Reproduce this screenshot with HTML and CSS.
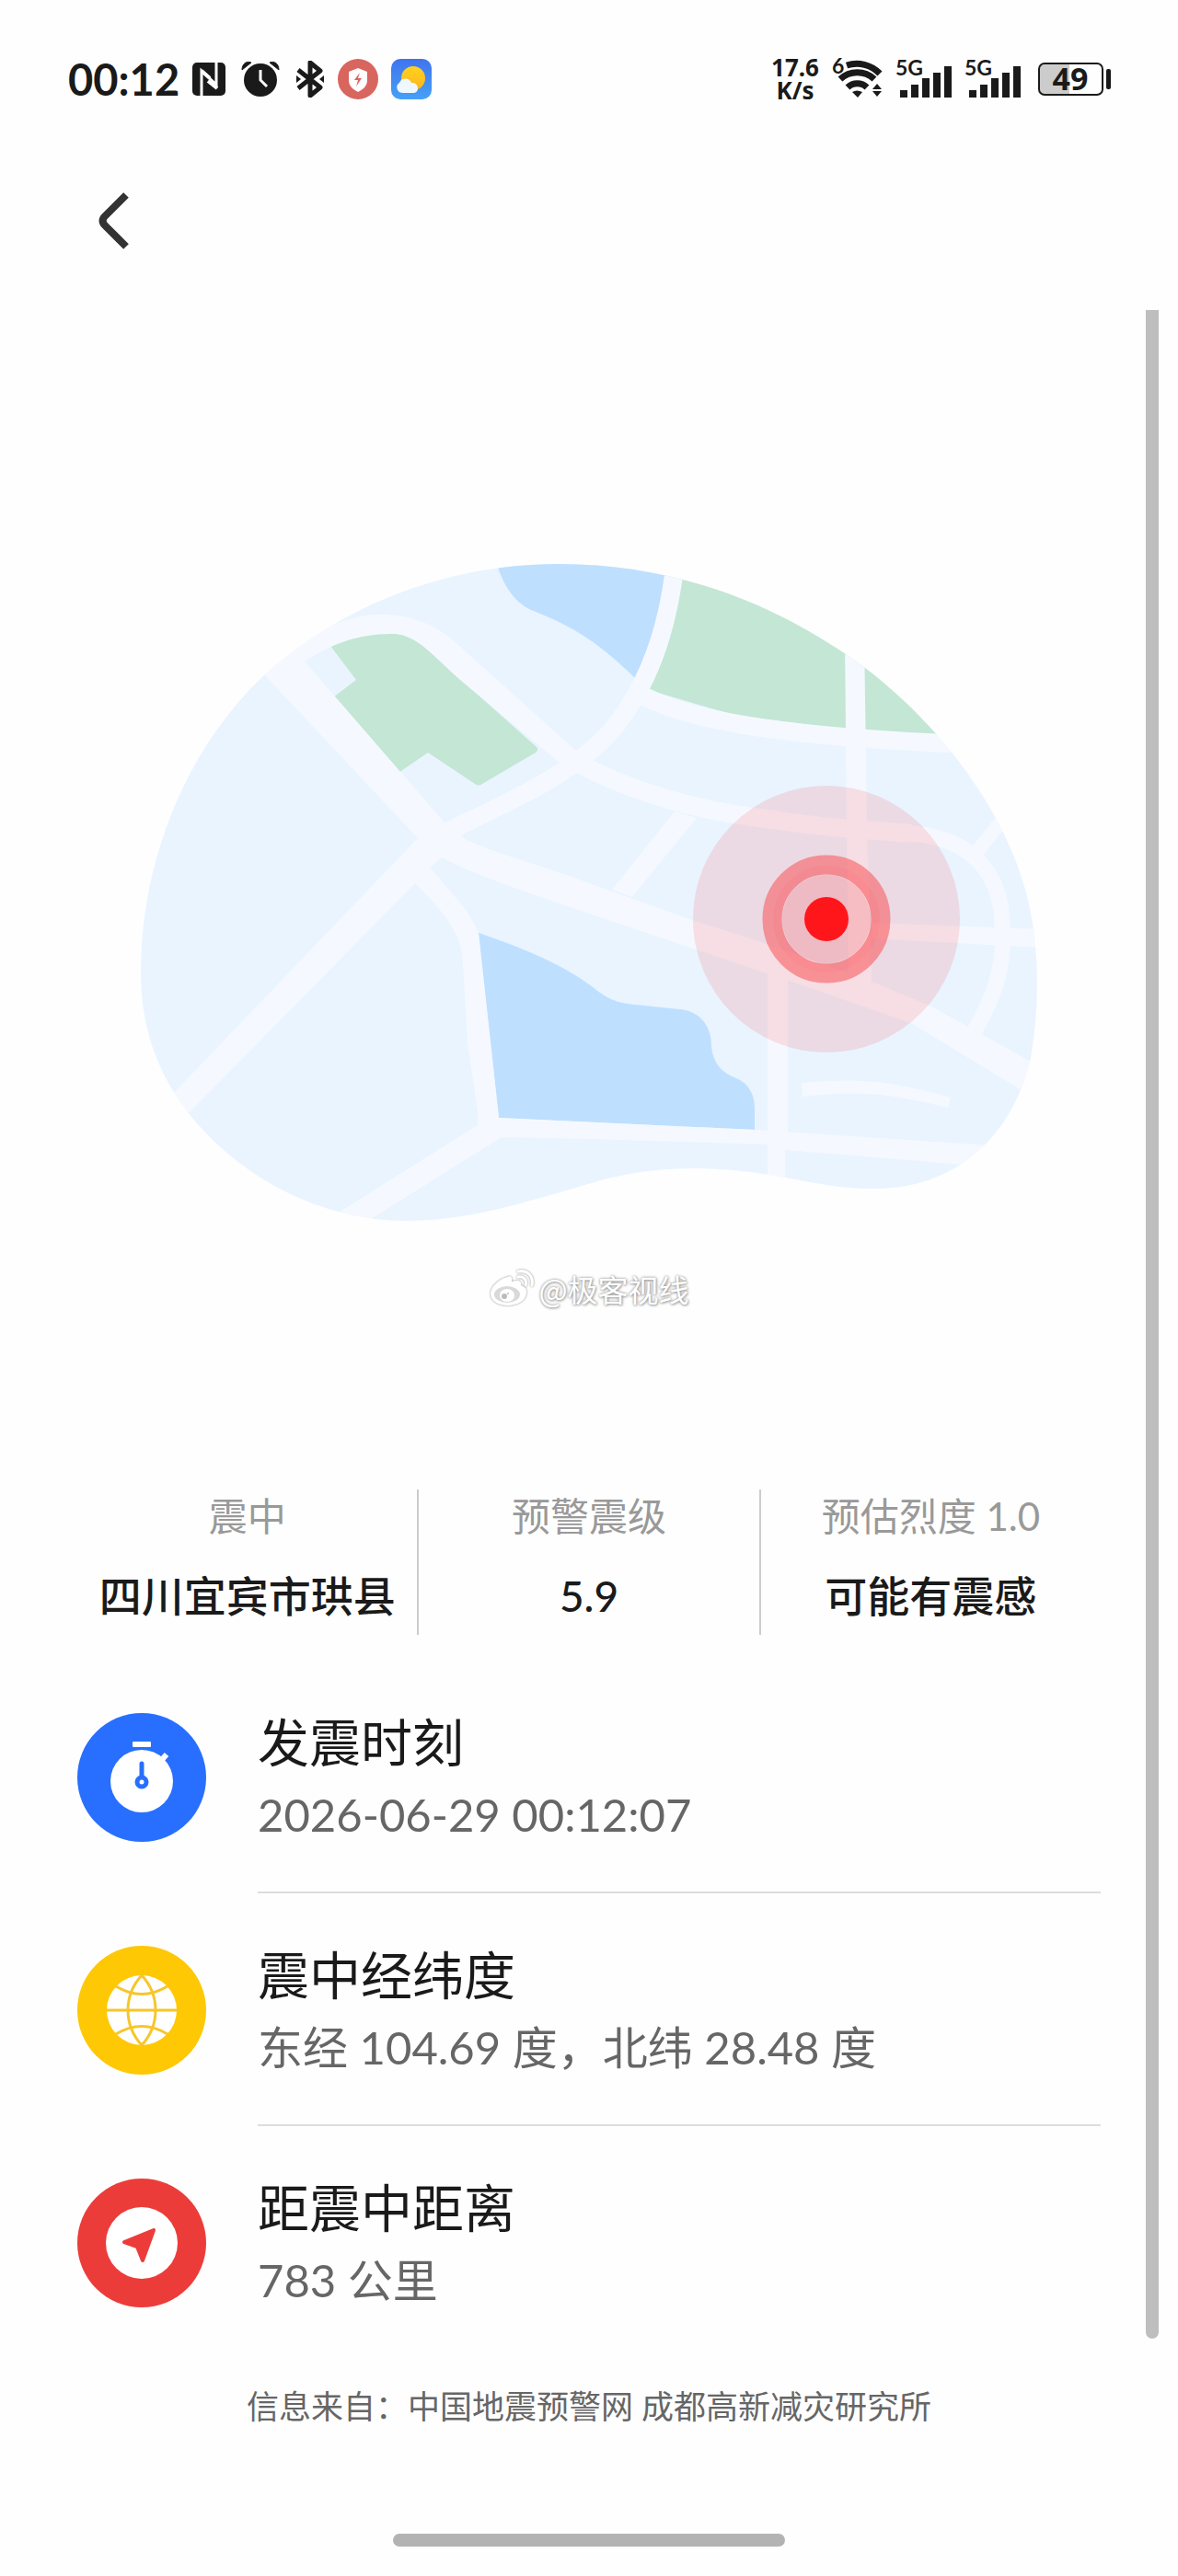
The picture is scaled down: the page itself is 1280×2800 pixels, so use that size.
FILE: index.html
```html
<!DOCTYPE html>
<html lang="zh-CN">
<head>
  <meta charset="UTF-8">
  <meta name="viewport" content="width=device-width, initial-scale=1.0">
  <title>地震预警</title>
  <link rel="stylesheet" href="styles.css">
</head>
<body>
  <div class="screen">
    <!-- Status Bar -->
    <div class="status-bar">
      <div class="status-left">
        <span class="clock">00:12</span>
        <svg class="nfc" width="36" height="36" viewBox="0 0 36 36">
          <rect width="36" height="36" rx="5" fill="#1a1a1a"/>
          <path d="M10 36V9l16 15V0" fill="none" stroke="#fff" stroke-width="3"/>
          <path d="M10 9l9 8M17 20l10 8" fill="none" stroke="#fff" stroke-width="4"/>
        </svg>
        <svg class="alarm" width="42" height="40" viewBox="0 0 42 40">
          <circle cx="21" cy="21" r="18" fill="#1a1a1a"/>
          <path d="M1 10C1 3 6 0 11 2zM41 10C41 3 36 0 31 2z" fill="#1a1a1a" stroke="#1a1a1a" stroke-width="1"/>
          <path d="M21 10v11l7 7" fill="none" stroke="#fff" stroke-width="3"/>
        </svg>
        <svg class="bluetooth" width="32" height="40" viewBox="0 0 32 40">
          <path d="M3 10l24 19-11 9V2l11 9L3 30" fill="none" stroke="#1a1a1a" stroke-width="5" stroke-linejoin="round"/>
          <path d="M1 16l5 4-5 4zM31 16l-5 4 5 4z" fill="#1a1a1a"/>
        </svg>
        <svg class="shield" width="44" height="44" viewBox="0 0 44 44">
          <circle cx="22" cy="22" r="22" fill="#d9655f"/>
          <path d="M22 10l10 4v9c0 6-4 10-10 13-6-3-10-7-10-13v-9z" fill="#fff"/>
          <path d="M24 15l-6 8h4l-2 7 6-9h-4z" fill="#d9655f"/>
        </svg>
        <svg class="weather" width="44" height="44" viewBox="0 0 44 44">
          <defs>
            <linearGradient id="sky" x1="0" y1="0" x2="0" y2="1">
              <stop offset="0" stop-color="#3f74ee"/>
              <stop offset="1" stop-color="#46a0f6"/>
            </linearGradient>
            <linearGradient id="sun" x1="0" y1="0" x2="0" y2="1">
              <stop offset="0" stop-color="#ffd21f"/>
              <stop offset="1" stop-color="#fdb51e"/>
            </linearGradient>
          </defs>
          <rect width="44" height="44" rx="10" fill="url(#sky)"/>
          <circle cx="24" cy="21" r="13" fill="url(#sun)"/>
          <path d="M12 37a6 6 0 0 1-3-11 7 7 0 0 1 13 0 6 6 0 0 1 7 6c0 3-2 5-5 5z" fill="#eff8fd"/>
        </svg>
      </div>
      <div class="status-right">
        <div class="speed"><span>17.6</span><span>K/s</span></div>
        <svg class="wifi" width="55" height="44" viewBox="0 0 55 44">
          <text x="0" y="16" class="tiny">6</text>
          <g fill="none" stroke="#1a1a1a" stroke-width="7">
            <path d="M16 7A35 35 0 0 1 52 16"/>
            <path d="M9 22A27 27 0 0 1 46 22"/>
            <path d="M17 31A15 15 0 0 1 38 31"/>
          </g>
          <path d="M22 36q5-3 11 0l-5 6z" fill="#1a1a1a"/>
          <path d="M44 33l5-6 5 6zM44 35l5 6 5-6z" fill="#1a1a1a"/>
        </svg>
        <svg class="signal" width="61" height="44" viewBox="0 0 61 44">
          <text x="0" y="18" class="tiny">5G</text>
          <path d="M5 34h8v8H5zM17 28h8v14h-8zM29 21h8v21h-8zM41 15h8v27h-8zM53 8h8v34h-8z" fill="#1a1a1a"/>
        </svg>
        <svg class="signal" width="61" height="44" viewBox="0 0 61 44">
          <text x="0" y="18" class="tiny">5G</text>
          <path d="M5 34h8v8H5zM17 28h8v14h-8zM29 21h8v21h-8zM41 15h8v27h-8zM53 8h8v34h-8z" fill="#1a1a1a"/>
        </svg>
        <svg class="battery" width="80" height="36" viewBox="0 0 80 36">
          <path d="M7 2h27v32H7q-5 0-5-5V7q0-5 5-5z" fill="#ccc"/>
          <rect x="1" y="1" width="69" height="34" rx="6" fill="none" stroke="#1a1a1a" stroke-width="2"/>
          <rect x="74" y="7" width="5" height="22" rx="2" fill="#1a1a1a"/>
          <text x="35" y="30" text-anchor="middle" class="level">49</text>
        </svg>
      </div>
    </div>

    <!-- Header -->
    <div class="header">
      <button class="back" aria-label="返回">
        <svg width="36" height="64" viewBox="0 0 36 64">
          <path d="M31 4L8 27q-5 5 0 10l23 23" fill="none" stroke="#333" stroke-width="8"/>
        </svg>
      </button>
    </div>

    <!-- Map -->
    <svg class="map" viewBox="150 610 980 720">
      <defs>
        <clipPath id="land">
          <path d="M153 1057C153 940 200 815 288 733C375 655 490 613 607 613C740 613 850 660 940 726C1015 783 1085 870 1112 960C1129 1015 1131 1085 1120 1150C1107 1205 1080 1241 1045 1265C1000 1294 950 1298 880 1285C800 1269 735 1263 660 1281C590 1300 520 1327 440 1327C350 1327 260 1280 205 1210C170 1165 153 1115 153 1057Z"/>
        </clipPath>
      </defs>
      <g clip-path="url(#land)">
        <rect x="150" y="610" width="980" height="720" fill="#e9f4ff"/>
        <!-- water and parks -->
        <path d="M536 600C544 632 556 653 577 663C625 682 650 698 691 738L730 680L730 600z" fill="#bfdfff"/>
        <path d="M520 1014C570 1031 610 1048 640 1070C657 1083 666 1090 690 1092L738 1097C762 1099 773 1116 773 1138C775 1156 784 1166 800 1172C814 1178 820 1190 820 1205V1228L542 1215z" fill="#bfdfff"/>
        <path d="M359 702C385 690 405 687 430 689C455 692 475 715 500 738L583 812Q586 815 582 818L524 852Q520 855 516 852L465 818L433 840L362 758L387 739z" fill="#c4e6d4"/>
        <path d="M735 600H1060V802L939 795L800 778L705 750z" fill="#c4e6d4"/>
        <!-- roads -->
        <g fill="#f5f9ff">
          <path d="M270 715L310 690L331 719L482 893L507 913C550 932 600 944 640 960L752 1000L830 1025L947 1067L1010 1093L1140 1165L1130 1197L990 1112L855 1065L833 1058L640 993C590 975 530 958 480 932L467 943L482 960C500 982 512 993 520 1015L542 1215L820 1228L1090 1246L1060 1267L853 1250L853 1300H834V1244L640 1238L545 1236L395 1330L360 1323L519 1223L520 1215L508 1133L503 1047C502 1010 475 985 451 960L200 1215L185 1192L407 960L454 911z"/>
          <path d="M300 712C350 680 385 668 413 668C445 668 470 678 490 694L628 818L645 840L608 829L500 739C470 712 452 690 430 689C390 688 360 700 331 719z"/>
          <path d="M918 690H939L942 900L947 1068L922 1062L920 900z"/>
          <path d="M834 1050H856V1240H834z"/>
          <path d="M947 1003L1130 1010V1030L947 1020z"/>
          <path d="M733 882L757 889L687 975L665 967z"/>
          <path d="M871 1177Q925 1172 960 1177Q1000 1183 1033 1193L1030 1204Q990 1194 957 1190Q915 1186 872 1192z"/>
        </g>
        <g fill="none" stroke="#f5f9ff" stroke-width="20">
          <path d="M618 824C690 865 770 883 840 891C900 901 960 903 990 906"/>
          <path d="M985 906C1050 908 1090 945 1089 1010C1092 1050 1080 1085 1058 1122" stroke-width="17"/>
          <path d="M1092 888L1058 930" stroke-width="15"/>
          <path d="M734 610C725 690 703 745 668 790C625 842 545 875 480 907"/>
          <path d="M698 756C760 788 880 802 1050 809"/>
        </g>
      </g>
      <!-- epicenter -->
      <circle cx="898" cy="999" r="145" fill="#ff1e1e" fill-opacity="0.12"/>
      <circle cx="898" cy="999" r="59" fill="none" stroke="#fa3c40" stroke-width="21" stroke-opacity="0.48"/>
      <circle cx="898" cy="999" r="53" fill="none" stroke="#fa3c40" stroke-width="10" stroke-opacity="0.06"/>
      <circle cx="898" cy="999" r="48" fill="#fa3c40" fill-opacity="0.2"/>
      <circle cx="898" cy="999" r="24" fill="#ff161b"/>
    </svg>

    <div class="watermark">
      <svg width="50" height="44" viewBox="0 0 50 44">
        <path d="M20 9c4-2 6 0 5 5 7-2 11-1 10 4 5 2 7 5 6 9-1 8-10 13-20 13C10 40 2 35 2 27c0-7 9-16 18-18z" fill="#fff"/>
        <ellipse cx="20" cy="28" rx="14" ry="9" fill="#d9d9d9"/>
        <ellipse cx="20" cy="29" rx="8" ry="7" fill="#fff"/>
        <circle cx="17" cy="30" r="3" fill="#bbb"/>
        <circle cx="21" cy="27" r="1" fill="#bbb"/>
        <path d="M32 9c6-1 10 3 8 9M32 3c10-2 17 5 15 15" fill="none" stroke="#fff" stroke-width="3" stroke-linecap="round"/>
      </svg>
      <span>@极客视线</span>
    </div>

    <!-- Summary -->
    <div class="stats">
      <div class="stat">
        <div class="stat-label">震中</div>
        <div class="stat-value">四川宜宾市珙县</div>
      </div>
      <div class="stat">
        <div class="stat-label">预警震级</div>
        <div class="stat-value">5.9</div>
      </div>
      <div class="stat">
        <div class="stat-label">预估烈度 1.0</div>
        <div class="stat-value">可能有震感</div>
      </div>
    </div>

    <!-- Details -->
    <div class="details">
      <div class="item">
        <svg class="item-icon" viewBox="0 0 140 140">
          <circle cx="70" cy="70" r="70" fill="#286fff"/>
          <rect x="60" y="31" width="20" height="6" rx="1" fill="#fff"/>
          <path d="M89 54l8-9" stroke="#fff" stroke-width="6"/>
          <circle cx="70" cy="74" r="34" fill="#fff"/>
          <path d="M70 55v15" stroke="#286fff" stroke-width="5" stroke-linecap="round"/>
          <circle cx="70" cy="75" r="5" fill="#fff" stroke="#286fff" stroke-width="5"/>
        </svg>
        <div class="item-text">
          <div class="item-title">发震时刻</div>
          <div class="item-desc">2026-06-29 00:12:07</div>
        </div>
      </div>
      <div class="item">
        <svg class="item-icon" viewBox="0 0 140 140">
          <circle cx="70" cy="70" r="70" fill="#ffc804"/>
          <circle cx="70" cy="70" r="38" fill="#fff"/>
          <g fill="none" stroke="#f6c62c" stroke-width="3">
            <path d="M32 70h76"/>
            <path d="M70 32C50 54 50 86 70 108C90 86 90 54 70 32z"/>
            <path d="M42 44Q70 61 98 44M42 96Q70 79 98 96"/>
          </g>
        </svg>
        <div class="item-text">
          <div class="item-title">震中经纬度</div>
          <div class="item-desc">东经 104.69 度，北纬 28.48 度</div>
        </div>
      </div>
      <div class="item">
        <svg class="item-icon" viewBox="0 0 140 140">
          <circle cx="70" cy="70" r="70" fill="#ec3c3a"/>
          <circle cx="70" cy="70" r="39" fill="#fff"/>
          <path d="M83 56L51 69L65 74L71 89z" fill="#ec3c3a" stroke="#ec3c3a" stroke-width="4" stroke-linejoin="round"/>
        </svg>
        <div class="item-text">
          <div class="item-title">距震中距离</div>
          <div class="item-desc">783 公里</div>
        </div>
      </div>
    </div>

    <div class="source">信息来自：中国地震预警网 成都高新减灾研究所</div>
    <div class="home-bar"></div>
    <div class="scroll-thumb"></div>
  </div>
</body>
</html>
```
FILE: styles.css
```css
* {
  box-sizing: border-box;
}

body {
  margin: 0;
  background-color: #fefefe;
  color: #1a1a1a;
  font-family: Lato, "Noto Sans CJK SC", sans-serif;
}

.screen {
  position: relative;
  padding-bottom: 32px;
}

/* Status bar */
.status-bar {
  height: 172px;
  padding: 0 72px 0 74px;
  display: flex;
  justify-content: space-between;
  align-items: center;
}

.status-left, .status-right {
  display: flex;
  align-items: center;
  gap: 14px;
}

.clock {
  font-size: 47px;
  font-weight: 700;
  line-height: 48px;
}

.nfc, .alarm {
  margin-right: 3px;
}

.speed {
  display: flex;
  flex-direction: column;
  align-items: center;
  font-family: "Noto Sans", sans-serif;
  font-size: 26px;
  font-weight: 700;
  line-height: 25px;
}

.wifi, .signal, .battery {
  overflow: visible;
}

.tiny {
  font-size: 23px;
  font-weight: 700;
  fill: #1a1a1a;
}

.battery {
  margin-left: 5px;
}

.level {
  font-family: "Noto Sans", sans-serif;
  font-size: 34px;
  font-weight: 700;
  fill: #1a1a1a;
}

/* Header */
.header {
  height: 136px;
  padding: 0 106px;
  display: flex;
  align-items: center;
}

.back {
  display: flex;
  padding: 0;
  border: none;
  background: none;
  cursor: pointer;
}

/* Map */
.map {
  display: block;
  width: 100%;
  max-width: 980px;
  margin: 302px auto 0;
}

.watermark {
  height: 50px;
  margin-top: 46px;
  display: flex;
  justify-content: center;
  align-items: center;
  gap: 4px;
  color: #fff;
  font-family: "Noto Sans CJK SC", sans-serif;
  font-size: 33px;
  line-height: 48px;
  text-shadow: 0 0 3px #888, 1px 1px 3px #aaa;
}

.watermark svg {
  filter: drop-shadow(0 0 1px #888);
}

/* Summary */
.stats {
  margin: 193px 84px 0;
  display: flex;
}

.stat {
  flex: 1;
  height: 158px;
  text-align: center;
  white-space: nowrap;
}

.stat + .stat {
  border-left: 2px solid #ccc;
}

.stat-label {
  color: #999;
  font-size: 42px;
  line-height: 58px;
}

.stat-value {
  margin-top: 24px;
  font-size: 46px;
  font-weight: 500;
  line-height: 68px;
}

/* Details */
.details {
  margin: 28px 84px 0;
}

.item {
  height: 253px;
  display: flex;
  align-items: center;
  gap: 56px;
}

.item-icon {
  width: 140px;
  height: 140px;
}

.item-text {
  flex: 1;
  align-self: stretch;
  display: flex;
  flex-direction: column;
  justify-content: center;
  padding-top: 4px;
  border-bottom: 2px solid #ddd;
}

.item:last-child .item-text {
  border-bottom-color: transparent;
}

.item-title {
  font-size: 56px;
  line-height: 78px;
}

.item-desc {
  color: #666;
  font-size: 49px;
  line-height: 78px;
}

.source {
  margin-top: 26px;
  color: #666;
  font-size: 35px;
  line-height: 50px;
  text-align: center;
}

.home-bar {
  width: 426px;
  height: 14px;
  margin: 114px auto 0;
  border-radius: 7px;
  background-color: #b3b3b3;
}

.scroll-thumb {
  position: absolute;
  top: 337px;
  right: 21px;
  bottom: 258px;
  width: 14px;
  border-radius: 0 0 7px 7px;
  background-color: #bebebe;
}
```
